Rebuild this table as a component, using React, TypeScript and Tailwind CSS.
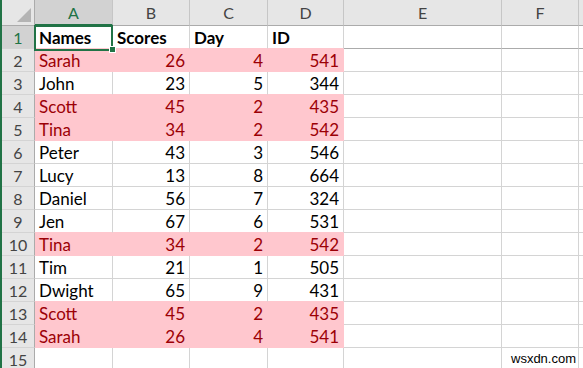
import React from "react";

type Row = { n: number; cells: (string | number)[]; pink?: boolean; bold?: boolean };

const rows: Row[] = [
  { n: 1, cells: ["Names", "Scores", "Day", "ID"], bold: true },
  { n: 2, cells: ["Sarah", 26, 4, 541], pink: true },
  { n: 3, cells: ["John", 23, 5, 344] },
  { n: 4, cells: ["Scott", 45, 2, 435], pink: true },
  { n: 5, cells: ["Tina", 34, 2, 542], pink: true },
  { n: 6, cells: ["Peter", 43, 3, 546] },
  { n: 7, cells: ["Lucy", 13, 8, 664] },
  { n: 8, cells: ["Daniel", 56, 7, 324] },
  { n: 9, cells: ["Jen", 67, 6, 531] },
  { n: 10, cells: ["Tina", 34, 2, 542], pink: true },
  { n: 11, cells: ["Tim", 21, 1, 505] },
  { n: 12, cells: ["Dwight", 65, 9, 431] },
  { n: 13, cells: ["Scott", 45, 2, 435], pink: true },
  { n: 14, cells: ["Sarah", 26, 4, 541], pink: true },
  { n: 15, cells: [] },
];

const colW = ["w-[78px]", "w-[77px]", "w-[78px]", "w-[76px]", "w-[158px]", "w-[77px]"];
const colNames = ["A", "B", "C", "D", "E", "F"];

const font = { fontFamily: "Lato, 'Open Sans', sans-serif" };

export default function App() {
  return (
    <div
      className="relative w-[583px] h-[368px] overflow-hidden bg-white border-l-2 border-[#217346] text-[16px] leading-none"
      style={font}
    >
      {/* header row */}
      <div className="flex h-[26px]">
        <div className="relative w-[33px] shrink-0 bg-[#e6e6e6] border-r border-b border-[#ababab]">
          <div className="absolute right-[3px] bottom-[3px] w-0 h-0 border-l-[14px] border-l-transparent border-b-[14px] border-b-[#b4b4b4]" />
        </div>
        {colNames.map((c, i) => (
          <div
            key={c}
            className={`${colW[i]} shrink-0 flex items-center justify-center border-r pt-[1px] ${
              i === 0
                ? "bg-[#d2d2d2] text-[#217346] border-r-[#c6c6c6] border-b-2 border-b-[#217346]"
                : "bg-[#e6e6e6] text-[#444444] border-r-[#c6c6c6] border-b border-b-[#ababab]"
            }`}
          >
            {c}
          </div>
        ))}
        <div className="flex-1 bg-[#e6e6e6] border-b border-[#ababab]" />
      </div>

      {rows.map((r, ri) => {
        const next = rows[ri + 1];
        return (
          <div key={r.n} className="flex h-[23px]">
            <div
              className={`w-[33px] shrink-0 flex items-center justify-center pt-[1px] border-r border-b border-b-[#d4d4d4] border-r-[#ababab] ${
                r.n === 1 ? "bg-[#d2d2d2] text-[#217346]" : "bg-[#e6e6e6] text-[#444444]"
              }`}
            >
              {r.n}
            </div>
            {colNames.map((c, i) => {
              const inTable = i < 4;
              const pink = inTable && r.pink;
              const pinkBelow = inTable && (r.pink || (next && next.pink));
              const v = r.cells[i];
              const isNum = typeof v === "number";
              const rb = pink ? "border-r-[#ffc7ce]" : "border-r-[#d4d4d4]";
              const bb = pinkBelow
                ? "border-b-[#ffc7ce]"
                : r.n === 1
                ? "border-b-[#ababab]"
                : "border-b-[#d4d4d4]";
              return (
                <div
                  key={c}
                  className={`${colW[i]} shrink-0 flex items-center px-[4px] pt-[1px] text-[17px] border-r border-b ${rb} ${bb} ${
                    pink ? "bg-[#ffc7ce] text-[#9c0006]" : "text-black"
                  } ${isNum ? "justify-end" : "justify-start"} ${r.bold ? "font-bold" : ""}`}
                >
                  {v !== undefined ? String(v) : ""}
                </div>
              );
            })}
            <div className={`flex-1 border-b ${r.n === 1 ? "border-b-[#ababab]" : "border-b-[#d4d4d4]"}`} />
          </div>
        );
      })}

      {/* selection box A1 */}
      <div className="absolute left-[32px] top-[25px] w-[79px] h-[26px] border-2 border-[#217346] pointer-events-none" />
      <div className="absolute left-[107px] top-[46px] w-[7px] h-[7px] bg-[#217346] border border-white" />

      {/* watermark */}
      <div
        className="absolute left-[509px] top-[352px] text-[13px] text-black leading-none"
        style={{ fontFamily: "'Liberation Sans', Arial, sans-serif" }}
      >
        wsxdn.com
      </div>
    </div>
  );
}
